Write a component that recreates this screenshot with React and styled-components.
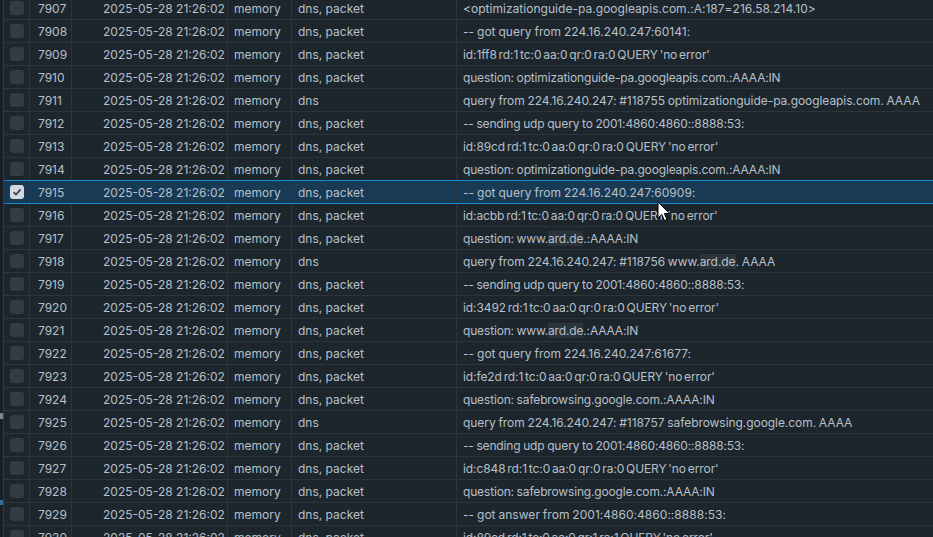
import React from 'react';
import styled, { createGlobalStyle } from 'styled-components';

const GlobalStyle = createGlobalStyle`
  html, body {
    margin: 0;
    height: 100%;
    overflow: hidden;
    background: #1d252d;
  }
`;

const Page = styled.div`
  width: 933px;
  height: 537px;
  overflow: hidden;
  position: relative;
  display: flex;
  background: #1d252d;
  color: #b6c0c9;
  font-family: Inter, "Liberation Sans", sans-serif;
  font-size: 12px;
`;

const Gutter = styled.div`
  width: 4px;
  flex: none;
  background: #1a1f25;
  border-right: 1px solid #303840;
  box-sizing: border-box;
  display: flex;
  flex-direction: column;
  align-items: flex-start;
`;

const Speck = styled.span`
  width: 3px;
  height: 6px;
  margin-top: 413px;
  background: #7d868e;
`;

const Notch = styled.span`
  width: 3px;
  height: 5px;
  margin-top: 81px;
  background: #2f6d9e;
`;

const Table = styled.div`
  flex: 1;
  margin-top: -3px;
`;

const Row = styled.div`
  display: grid;
  grid-template-columns: 26px 42px 156px 64px 165px 1fr;
  box-sizing: border-box;
  border-bottom: 1px solid ${(p) => (p.$selected ? '#1b86d0' : '#2c343c')};
  border-top: ${(p) => (p.$selected ? '1px solid #1b86d0' : 'none')};
  margin-top: ${(p) => (p.$selected ? '-1px' : '0')};
  height: ${(p) => (p.$selected ? '24px' : '23px')};
  background: ${(p) => (p.$selected ? '#193a55' : 'transparent')};
`;

const Cell = styled.div`
  display: flex;
  align-items: center;
  padding-left: ${(p) => p.$pad || 6}px;
  border-right: 1px solid #2c343c;
  white-space: pre;
  overflow: hidden;
`;

const MessageCell = styled.div`
  display: flex;
  align-items: center;
  padding-left: 6px;
  white-space: pre;
  overflow: hidden;
  letter-spacing: ${(p) => p.$track}px;
  word-spacing: ${(p) => p.$gap}px;
`;

const Box = styled.span`
  width: 14px;
  height: 14px;
  border-radius: 3px;
  background: ${(p) => (p.$checked ? '#d5d8dc' : '#343b44')};
  display: flex;
  align-items: center;
  justify-content: center;
`;

const Mark = styled.mark`
  background: #2b333b;
  color: inherit;
`;

const Cursor = styled.svg`
  position: absolute;
  left: 657px;
  top: 201px;
`;

const rows = [
  [7907, 'dns, packet', '<optimizationguide-pa.googleapis.com.:A:187=216.58.214.10>'],
  [7908, 'dns, packet', '-- got query from 224.16.240.247:60141:'],
  [7909, 'dns, packet', "id:1ff8 rd:1 tc:0 aa:0 qr:0 ra:0 QUERY 'no error'"],
  [7910, 'dns, packet', 'question: optimizationguide-pa.googleapis.com.:AAAA:IN'],
  [7911, 'dns', 'query from 224.16.240.247: #118755 optimizationguide-pa.googleapis.com. AAAA'],
  [7912, 'dns, packet', '-- sending udp query to 2001:4860:4860::8888:53:'],
  [7913, 'dns, packet', "id:89cd rd:1 tc:0 aa:0 qr:0 ra:0 QUERY 'no error'"],
  [7914, 'dns, packet', 'question: optimizationguide-pa.googleapis.com.:AAAA:IN'],
  [7915, 'dns, packet', '-- got query from 224.16.240.247:60909:'],
  [7916, 'dns, packet', "id:acbb rd:1 tc:0 aa:0 qr:0 ra:0 QUERY 'no error'"],
  [7917, 'dns, packet', 'question: www.|ard.de|.:AAAA:IN'],
  [7918, 'dns', 'query from 224.16.240.247: #118756 www.|ard.de|. AAAA'],
  [7919, 'dns, packet', '-- sending udp query to 2001:4860:4860::8888:53:'],
  [7920, 'dns, packet', "id:3492 rd:1 tc:0 aa:0 qr:0 ra:0 QUERY 'no error'"],
  [7921, 'dns, packet', 'question: www.|ard.de|.:AAAA:IN'],
  [7922, 'dns, packet', '-- got query from 224.16.240.247:61677:'],
  [7923, 'dns, packet', "id:fe2d rd:1 tc:0 aa:0 qr:0 ra:0 QUERY 'no error'"],
  [7924, 'dns, packet', 'question: safebrowsing.google.com.:AAAA:IN'],
  [7925, 'dns', 'query from 224.16.240.247: #118757 safebrowsing.google.com. AAAA'],
  [7926, 'dns, packet', '-- sending udp query to 2001:4860:4860::8888:53:'],
  [7927, 'dns, packet', "id:c848 rd:1 tc:0 aa:0 qr:0 ra:0 QUERY 'no error'"],
  [7928, 'dns, packet', 'question: safebrowsing.google.com.:AAAA:IN'],
  [7929, 'dns, packet', '-- got answer from 2001:4860:4860::8888:53:'],
  [7930, 'dns, packet', "id:89cd rd:1 tc:0 aa:0 qr:1 ra:1 QUERY 'no error'"],
];

// each kind of log line sits a little tighter or looser than plain Inter
const spacingFor = (text) => {
  if (text.startsWith('<')) return [0.03, 0];
  if (text.startsWith('id:')) return [-0.1, -1.4];
  if (text.startsWith('question')) return [-0.16, -0.5];
  if (text.startsWith('query')) return [-0.06, -0.5];
  if (text.startsWith('-- sending')) return [-0.16, -0.5];
  return [0.03, -0.5];
};

const Message = ({ text }) => {
  const [track, gap] = spacingFor(text);
  return (
    <MessageCell $track={track} $gap={gap}>
      <span>
        {text.split('|').map((part, i) => (i % 2 ? <Mark key={i}>{part}</Mark> : part))}
      </span>
    </MessageCell>
  );
};

const App = () => (
  <Page>
    <GlobalStyle />
    <Gutter>
      <Speck />
      <Notch />
    </Gutter>
    <Table>
      {rows.map(([id, topics, msg]) => {
        const selected = id === 7915;
        return (
          <Row key={id} $selected={selected}>
            <Cell $pad={6}>
              <Box $checked={selected}>
                {selected && (
                  <svg width="10" height="10" viewBox="0 0 10 10">
                    <path d="M1.5 5.2 L4 7.6 L8.6 2.4" fill="none" stroke="#3a424b" strokeWidth="1.7" />
                  </svg>
                )}
              </Box>
            </Cell>
            <Cell $pad={8}>{id}</Cell>
            <Cell $pad={31}>2025-05-28 21:26:02</Cell>
            <Cell>memory</Cell>
            <Cell>{topics}</Cell>
            <Message text={msg} />
          </Row>
        );
      })}
    </Table>
    <Cursor width="14" height="22" viewBox="0 0 14 22">
      <path d="M1 1 L1 17 L4.8 13.4 L7.4 19.5 L10 18.4 L7.4 12.6 L12.5 12.4 Z" fill="#fff" stroke="#000" strokeWidth="1" />
    </Cursor>
  </Page>
);

export default App;
